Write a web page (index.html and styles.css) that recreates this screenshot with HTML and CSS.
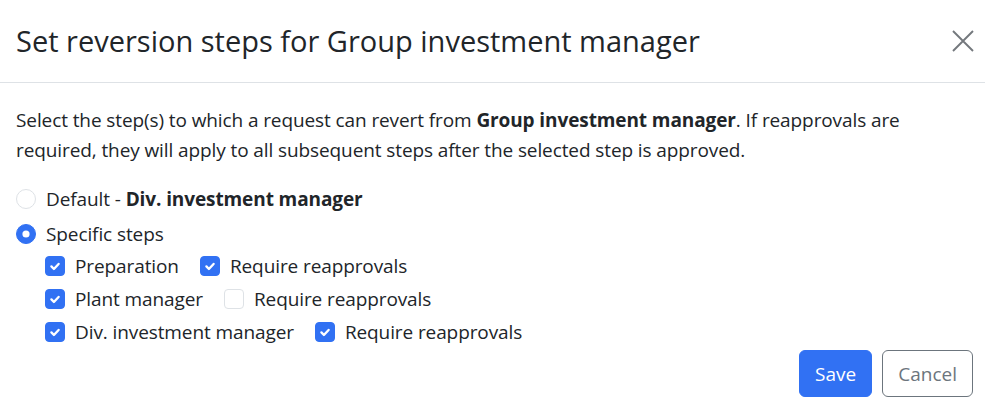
FILE: index.html
```html
<!DOCTYPE html>
<html lang="en">
<head>
  <meta charset="UTF-8" />
  <meta name="viewport" content="width=device-width, initial-scale=1.0" />
  <title>Set reversion steps</title>
  <link rel="stylesheet" href="styles.css">
</head>
<body>
  <div class="modal">
    <div class="modal-header">
      <h5 class="modal-title">Set reversion steps for Group investment manager</h5>
      <button class="btn-close" aria-label="Close">
        <svg width="22" height="22" viewBox="0 0 22 22">
          <path d="M1 1L21 21M21 1L1 21" stroke="#74787d" stroke-width="1.9" fill="none" />
        </svg>
      </button>
    </div>

    <div class="modal-body">
      <p class="intro">Select the step(s) to which a request can revert from <strong>Group investment manager</strong>. If reapprovals are required, they will apply to all subsequent steps after the selected step is approved.</p>

      <div class="form-check">
        <input type="radio" name="mode" id="mode-default" />
        <label for="mode-default">Default - <strong>Div. investment manager</strong></label>
      </div>
      <div class="form-check">
        <input type="radio" name="mode" id="mode-specific" checked />
        <label for="mode-specific">Specific steps</label>
      </div>

      <div class="steps">
        <div class="step">
          <div class="form-check">
            <input type="checkbox" id="step-1" checked />
            <label for="step-1">Preparation</label>
          </div>
          <div class="form-check">
            <input type="checkbox" id="reappr-1" checked />
            <label for="reappr-1">Require reapprovals</label>
          </div>
        </div>
        <div class="step">
          <div class="form-check">
            <input type="checkbox" id="step-2" checked />
            <label for="step-2">Plant manager</label>
          </div>
          <div class="form-check">
            <input type="checkbox" id="reappr-2" />
            <label for="reappr-2">Require reapprovals</label>
          </div>
        </div>
        <div class="step">
          <div class="form-check">
            <input type="checkbox" id="step-3" checked />
            <label for="step-3">Div. investment manager</label>
          </div>
          <div class="form-check">
            <input type="checkbox" id="reappr-3" checked />
            <label for="reappr-3">Require reapprovals</label>
          </div>
        </div>
      </div>
    </div>

    <div class="modal-footer">
      <button class="btn btn-primary">Save</button>
      <button class="btn btn-outline">Cancel</button>
    </div>
  </div>
</body>
</html>
```

FILE: styles.css
```css
body {
  margin: 0;
  font-family: "Segoe UI", "Open Sans", sans-serif;
  font-size: 19px;
  letter-spacing: -0.1px;
  line-height: 30px;
  color: #212529;
  background: #fff;
}

.modal {
  display: flex;
  flex-direction: column;
  height: 411px;
}

.modal-header {
  display: flex;
  align-items: center;
  justify-content: space-between;
  height: 84px;
  padding: 0 11px 0 16px;
  border-bottom: 1px solid #dee2e6;
}

.modal-title {
  margin: 0;
  font-size: 29px;
  font-weight: 500;
  letter-spacing: 0;
  line-height: 40px;
}

.btn-close {
  display: flex;
  padding: 0;
  border: none;
  background: none;
  cursor: pointer;
}

.modal-body {
  padding: 22px 16px 0;
}

.intro {
  margin: 0 0 18px;
}

.form-check {
  display: flex;
  align-items: center;
  gap: 10px;
  min-height: 32px;
  margin-bottom: 3px;
}

.form-check input {
  appearance: none;
  width: 20px;
  height: 20px;
  margin: 0;
  border: 1px solid #dee2e6;
  background-color: #fff;
  background-position: center;
  background-repeat: no-repeat;
  flex-shrink: 0;
}

.form-check input[type="radio"] {
  border-radius: 50%;
}

.form-check input[type="checkbox"] {
  border-radius: 4px;
}

.form-check input:checked {
  background-color: #3171f3;
  border-color: #3171f3;
}

.form-check input[type="radio"]:checked {
  background-image: url("data:image/svg+xml,%3csvg xmlns='http://www.w3.org/2000/svg' viewBox='-10 -10 20 20'%3e%3ccircle r='4' fill='%23fff'/%3e%3c/svg%3e");
}

.form-check input[type="checkbox"]:checked {
  background-image: url("data:image/svg+xml,%3csvg xmlns='http://www.w3.org/2000/svg' viewBox='0 0 20 20'%3e%3cpath fill='none' stroke='%23fff' stroke-linecap='round' stroke-linejoin='round' stroke-width='2.6' d='M6 10.5l2.8 2.8 5.2-5.6'/%3e%3c/svg%3e");
}

.steps {
  margin-top: -2px;
  padding-left: 29px;
}

.step {
  display: flex;
  gap: 21px;
}

.step .form-check {
  min-height: 30px;
}

.modal-footer {
  display: flex;
  justify-content: flex-end;
  gap: 10px;
  margin-top: auto;
  padding: 0 12px 14px;
}

.btn {
  font-family: inherit;
  font-size: 19px;
  line-height: 30px;
  padding: 7.5px 15px;
  border-radius: 6px;
  border: 1px solid transparent;
  cursor: pointer;
}

.btn-primary {
  background-color: #3171f3;
  border-color: #3171f3;
  color: #fff;
}

.btn-outline {
  background: #fff;
  border-color: #6c757d;
  color: #6c757d;
}
```
